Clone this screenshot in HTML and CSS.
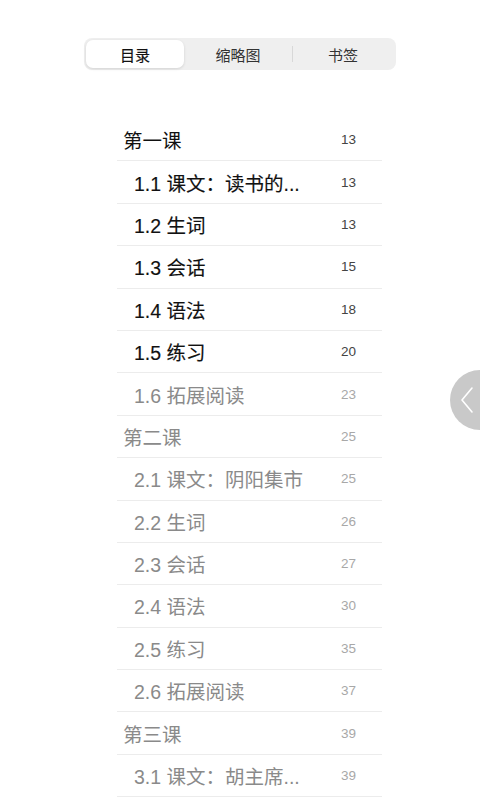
FILE: index.html
```html
<!DOCTYPE html>
<html lang="zh-CN">
<head>
    <meta charset="UTF-8">
    <meta name="viewport" content="width=device-width, initial-scale=1.0">
    <title>目录</title>
    <link rel="stylesheet" href="styles.css">
</head>
<body>
    <div class="tabs">
        <div class="tab active">目录</div>
        <div class="tab middle">缩略图</div>
        <div class="tab last">书签</div>
    </div>

    <ul class="toc">
        <li class="row chapter"><span class="title">第一课</span><span class="page">13</span></li>
        <li class="row sub"><span class="title">1.1 课文：读书的...</span><span class="page">13</span></li>
        <li class="row sub"><span class="title">1.2 生词</span><span class="page">13</span></li>
        <li class="row sub"><span class="title">1.3 会话</span><span class="page">15</span></li>
        <li class="row sub"><span class="title">1.4 语法</span><span class="page">18</span></li>
        <li class="row sub"><span class="title">1.5 练习</span><span class="page">20</span></li>
        <li class="row sub dim"><span class="title">1.6 拓展阅读</span><span class="page">23</span></li>
        <li class="row chapter dim"><span class="title">第二课</span><span class="page">25</span></li>
        <li class="row sub dim"><span class="title">2.1 课文：阴阳集市</span><span class="page">25</span></li>
        <li class="row sub dim"><span class="title">2.2 生词</span><span class="page">26</span></li>
        <li class="row sub dim"><span class="title">2.3 会话</span><span class="page">27</span></li>
        <li class="row sub dim"><span class="title">2.4 语法</span><span class="page">30</span></li>
        <li class="row sub dim"><span class="title">2.5 练习</span><span class="page">35</span></li>
        <li class="row sub dim"><span class="title">2.6 拓展阅读</span><span class="page">37</span></li>
        <li class="row chapter dim"><span class="title">第三课</span><span class="page">39</span></li>
        <li class="row sub dim"><span class="title">3.1 课文：胡主席...</span><span class="page">39</span></li>
    </ul>

    <div class="side-tab">
        <svg width="14" height="28" viewBox="0 0 14 28">
            <path d="M12 2 L2 14 L12 26" fill="none" stroke="#fff" stroke-width="1.6" stroke-linecap="round" stroke-linejoin="round"/>
        </svg>
    </div>
</body>
</html>
```

FILE: styles.css
```css
body {
    margin: 0;
    padding: 0;
    background: #fff;
    font-family: 'Liberation Sans', 'Noto Sans CJK SC', sans-serif;
    color: #111;
    width: 480px;
    height: 800px;
    overflow: hidden;
    position: relative;
}

.tabs {
    display: flex;
    width: 308px;
    height: 28px;
    margin: 38px 0 0 84px;
    padding: 2px;
    background: #efefef;
    border-radius: 8px;
}

.tab {
    display: flex;
    align-items: center;
    justify-content: center;
    font-size: 15px;
    color: #333;
    position: relative;
}

.tab.active {
    width: 98px;
    background: #fff;
    border-radius: 7px;
    box-shadow: 0 1px 3px rgba(0, 0, 0, 0.12);
    color: #111;
    -webkit-text-stroke: 0.2px #111;
}

.tab.middle {
    width: 108px;
}

.tab.last {
    flex: 1;
}

.tab.last::before {
    content: "";
    position: absolute;
    left: 0;
    top: 6px;
    height: 16px;
    width: 1px;
    background: #d8d8d8;
}

.toc {
    list-style: none;
    margin: 49px 0 0 117px;
    padding: 0;
    width: 265px;
}

.row {
    display: flex;
    align-items: center;
    justify-content: space-between;
    height: 41.4px;
    border-bottom: 1px solid #ececec;
    padding-right: 26px;
}

.row .title {
    font-size: 19.5px;
    color: #111;
}

.row.sub .title {
    padding-left: 17px;
    -webkit-text-stroke: 0.15px #111;
}

.row.chapter .title {
    padding-left: 6px;
}

.row .page {
    font-size: 13.5px;
    color: #444;
}

.row.dim .title {
    color: #8a8a8a;
    -webkit-text-stroke: 0;
}

.row.dim .page {
    color: #a8a8a8;
}

.side-tab {
    position: absolute;
    left: 450px;
    top: 370px;
    width: 30px;
    height: 60px;
    border-radius: 30px 0 0 30px;
    background: #c9c9c9;
    display: flex;
    align-items: center;
    padding-left: 10px;
    box-sizing: border-box;
}
```
